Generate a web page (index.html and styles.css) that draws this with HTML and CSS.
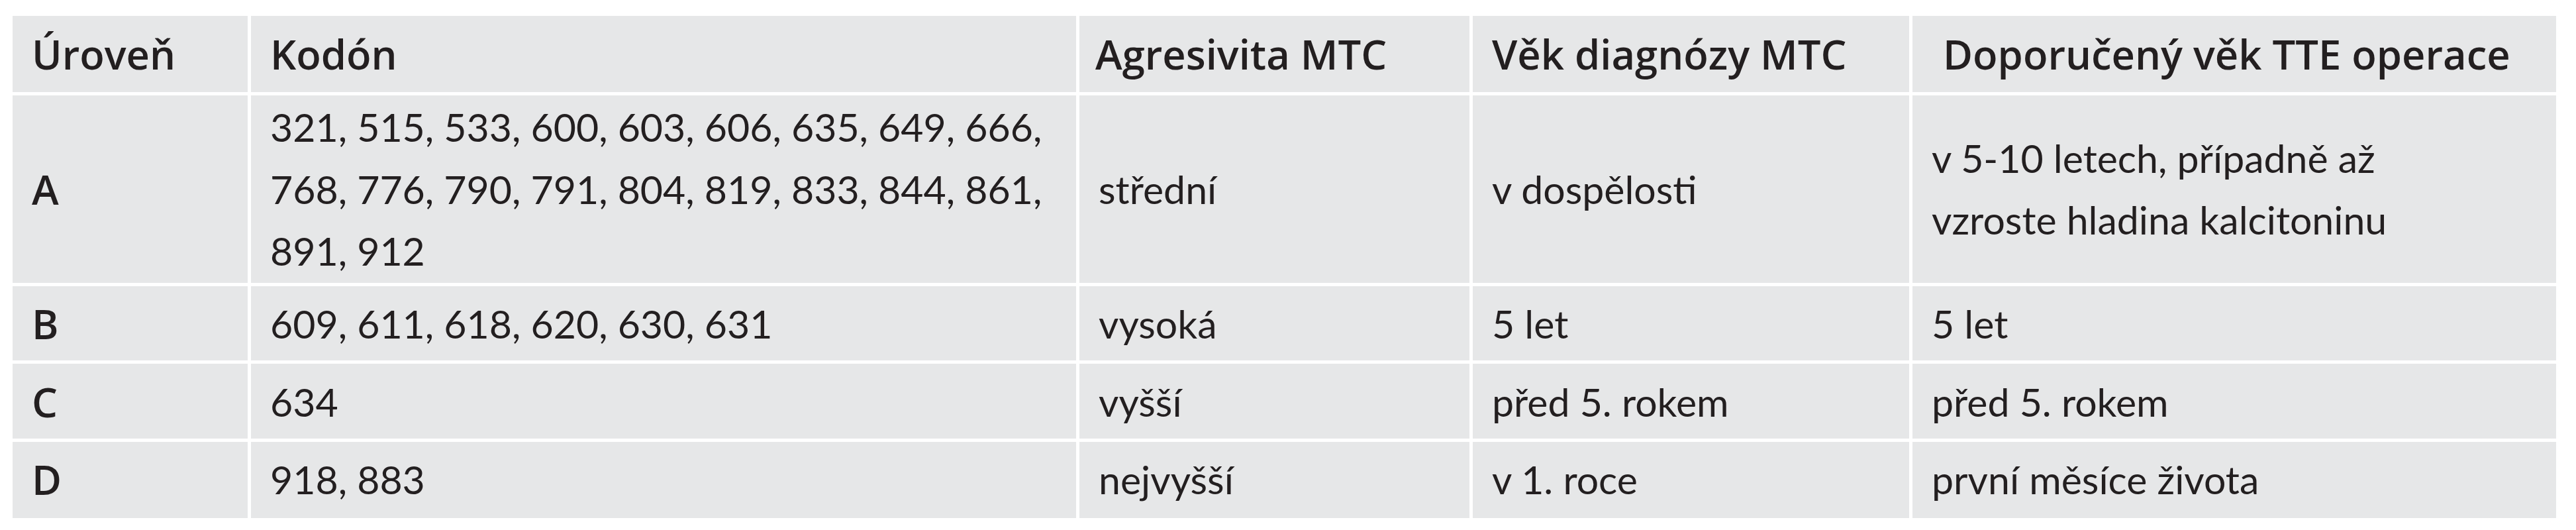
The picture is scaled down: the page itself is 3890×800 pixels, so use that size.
FILE: index.html
```html
<!DOCTYPE html>
<html lang="cs">
<head>
<meta charset="utf-8">
<title>Úroveň rizika</title>
<link rel="stylesheet" href="styles.css">
</head>
<body>
<table class="risk">
  <thead>
    <tr>
      <th class="c1">Úroveň</th>
      <th class="c2">Kodón</th>
      <th class="c3">Agresivita MTC</th>
      <th class="c4">Věk diagnózy MTC</th>
      <th class="c5 c5-head">Doporučený věk TTE operace</th>
    </tr>
  </thead>
  <tbody>
    <tr class="multi">
      <td class="lvl">A</td>
      <td>321, 515, 533, 600, 603, 606, 635, 649, 666,<br>768, 776, 790, 791, 804, 819, 833, 844, 861,<br>891, 912</td>
      <td>střední</td>
      <td>v dospělosti</td>
      <td>v 5-10 letech, případně až<br>vzroste hladina kalcitoninu</td>
    </tr>
    <tr class="mid">
      <td class="lvl">B</td>
      <td>609, 611, 618, 620, 630, 631</td>
      <td>vysoká</td>
      <td>5 let</td>
      <td>5 let</td>
    </tr>
    <tr class="mid">
      <td class="lvl">C</td>
      <td>634</td>
      <td>vyšší</td>
      <td>před 5. rokem</td>
      <td>před 5. rokem</td>
    </tr>
    <tr>
      <td class="lvl">D</td>
      <td>918, 883</td>
      <td>nejvyšší</td>
      <td>v 1. roce</td>
      <td>první měsíce života</td>
    </tr>
  </tbody>
</table>
</body>
</html>
```

FILE: styles.css
```css
html, body {
  margin: 0;
  padding: 0;
  background: #ffffff;
}

body {
  font-family: "Open Sans", "Noto Sans", "Liberation Sans", sans-serif;
  color: #231f20;
}

.risk {
  margin: 19px 0 0 14px;
  width: 3851px;
  table-layout: fixed;
  border-collapse: separate;
  border-spacing: 5px;
  line-height: 93.5px;
}

.risk th,
.risk td {
  box-sizing: border-box;
  background: #e6e7e8;
  padding: 10.75px 29px;
  text-align: left;
  vertical-align: middle;
  white-space: nowrap;
}

.risk th {
  font-family: "Open Sans", "Noto Sans", sans-serif;
  font-size: 61.5px;
  font-weight: 600;
}

.risk td {
  font-family: Lato, "Open Sans", sans-serif;
  font-size: 59px;
  font-weight: 400;
}

.c1 { width: 355px; }
.c2 { width: 1246px; }
.c3 { width: 589px; }
.c4 { width: 659px; }
.c5 { width: 972px; }

.risk th.c3 { padding-left: 24px; }
.risk th.c5-head { padding-left: 46px; }

.risk td.lvl {
  font-family: "Open Sans", "Noto Sans", sans-serif;
  font-size: 61.5px;
  font-weight: 600;
}

.risk tr.multi td {
  padding-top: 1px;
  padding-bottom: 1px;
}

.risk tr.mid td {
  padding-top: 10.75px;
  padding-bottom: 8.25px;
}
```
